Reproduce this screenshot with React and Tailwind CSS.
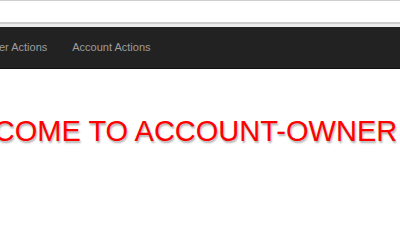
import React from "react";

const navItems = ["User Actions", "Account Actions"];

export default function App() {
  return (
    <div className="w-[400px] h-[250px] overflow-hidden bg-white font-['Liberation_Sans',Arial,sans-serif]">
      {/* browser chrome strip */}
      <div className="h-[22px] border-t border-[#cfcfcf] bg-white" />
      <div className="h-[2px] bg-[#cdcdcd]" />
      <div className="h-[3px] bg-[#ececec]" />

      <nav className="h-[42px] bg-[#222222] border-b border-[#111] flex items-center -ml-[27px] whitespace-nowrap">
        {navItems.map((item) => (
          <a key={item} className="px-[12.5px] text-[11px] text-[#9d9d9d]">
            {item}
          </a>
        ))}
      </nav>

      <div className="pt-[46px] whitespace-nowrap">
        <h1 className="-ml-[69px] text-[29px] leading-[33px] text-[#ff0000] [text-shadow:1px_2px_2px_#b0b0b0]">
          WELCOME TO ACCOUNT-OWNER
        </h1>
      </div>
    </div>
  );
}
